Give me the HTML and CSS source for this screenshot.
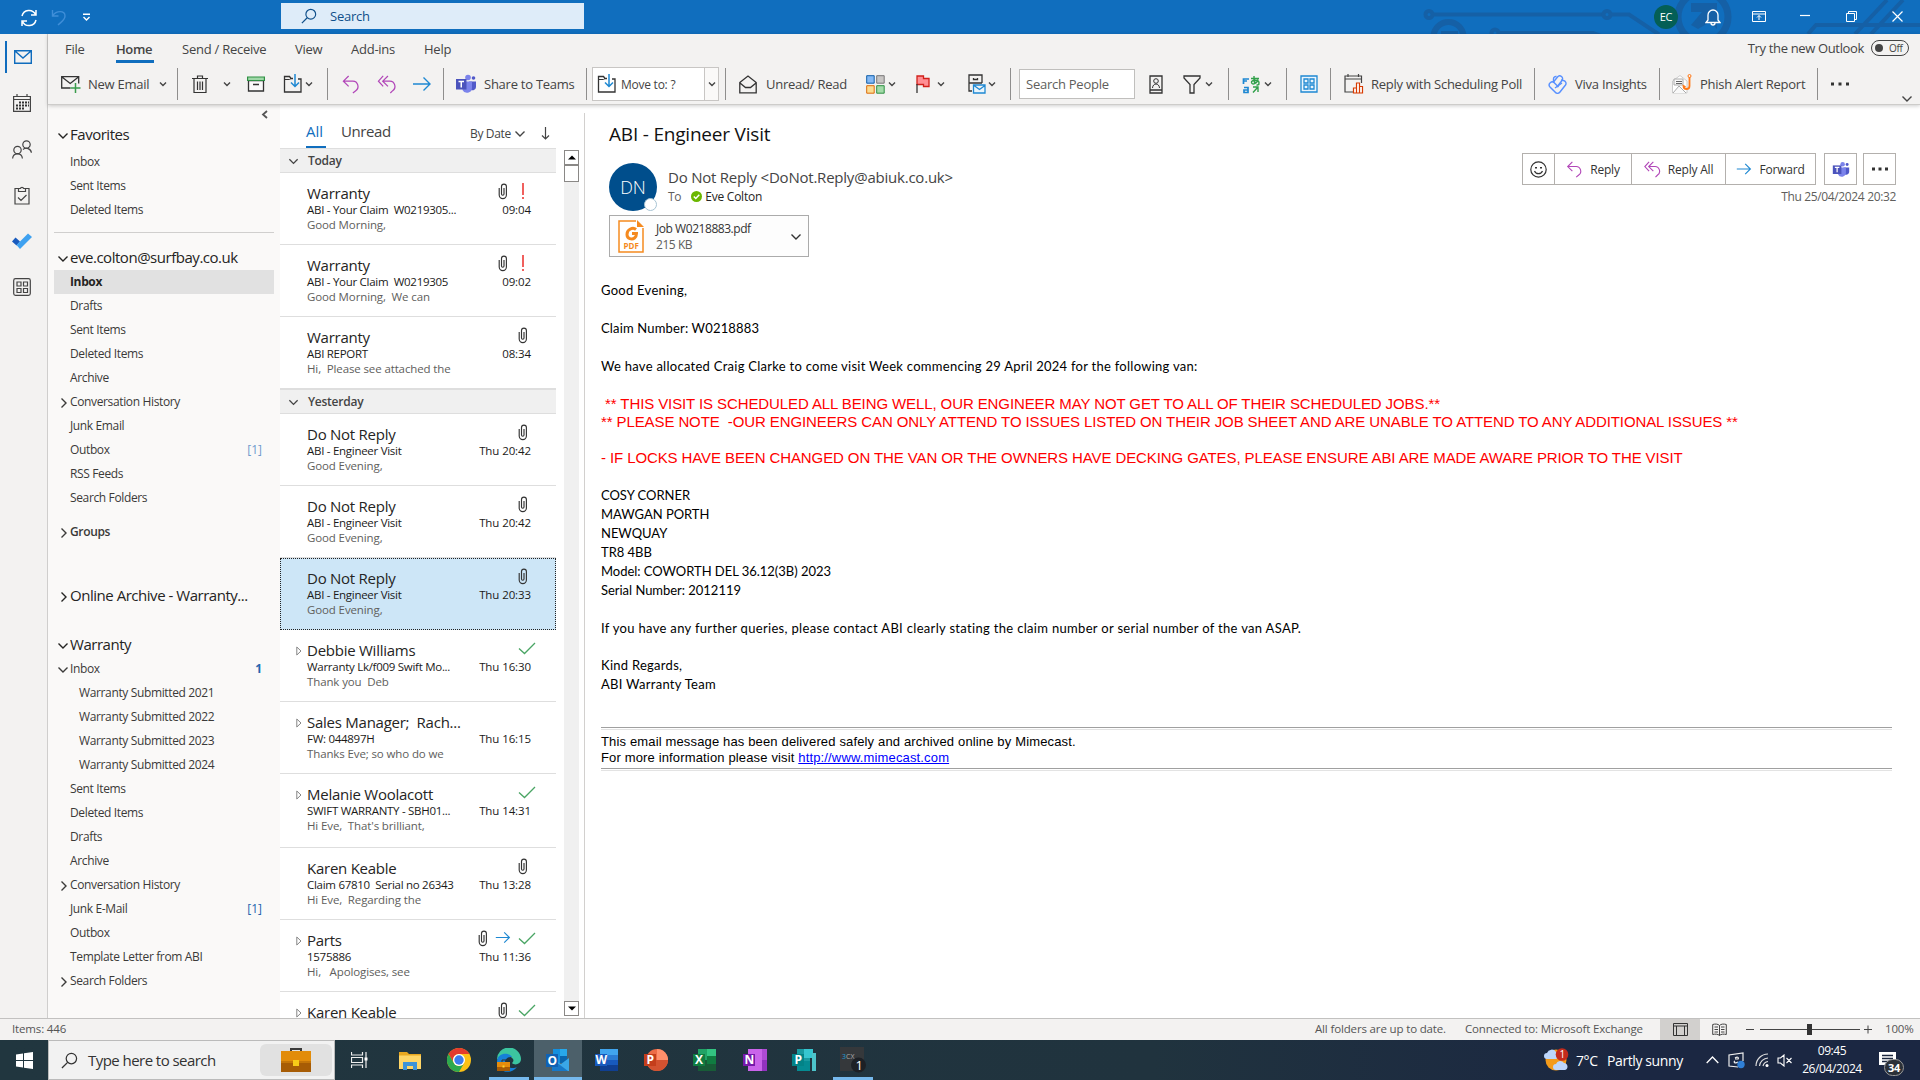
FILE: index.html
```
<!DOCTYPE html>
<html lang="en">
<head>
    <meta charset="UTF-8">
    <meta name="viewport" content="width=device-width, initial-scale=1.0">
    <title>Inbox - Outlook</title>
    <link rel="stylesheet" href="styles.css">
</head>
<body>
    <!-- shared icons -->
    <svg class="defs" width="0" height="0">
        <symbol id="down" viewBox="0 0 12 12"><path d="M1.500 3.500 6 8l4.500-4.500" fill="none" stroke="currentColor" stroke-width="1.400"/></symbol>
        <symbol id="right" viewBox="0 0 12 12"><path d="M4.500 1.500 9 6l-4.500 4.500" fill="none" stroke="currentColor" stroke-width="1.400"/></symbol>
        <symbol id="drop" viewBox="0 0 8 8"><path d="M1 2.500 4 5.500l3-3" fill="none" stroke="#444" stroke-width="1.400"/></symbol>
        <symbol id="clip" viewBox="0 0 10 17"><path d="M1.200 5v7a3.600 3.600 0 0 0 7.200 0V3.500a2.400 2.400 0 0 0-4.900 0V11a1.200 1.200 0 0 0 2.500 0V5" fill="none" stroke="#333" stroke-width="1.150"/></symbol>
        <symbol id="tick" viewBox="0 0 18 13"><path d="M1 6.500 6.500 11.500 17 1" fill="none" stroke="#4aa564" stroke-width="1.300"/></symbol>
        <symbol id="bang" viewBox="0 0 4 17"><path d="M1 0h2v12H1zM1 14h2v2H1z" fill="#f0605d"/></symbol>
        <symbol id="tri" viewBox="0 0 6 10"><path d="M.8 1 5 5 .8 9z" fill="none" stroke="#777" stroke-width=".9"/></symbol>
        <symbol id="reply" viewBox="0 0 18 20"><path d="M6.500 1 1 6.500 6.500 12M1.500 6.500H11a5.500 5.500 0 0 1 3 10l-3 2.500" fill="none" stroke="#b146b8" stroke-width="1.300"/></symbol>
        <symbol id="replyall" viewBox="0 0 20 20"><path d="M6 1 1 6.500 6 12M11 1 5.500 6.500 11 12M6 6.500h7a5.500 5.500 0 0 1 3 10L13.500 19" fill="none" stroke="#b146b8" stroke-width="1.300"/></symbol>
        <symbol id="forward" viewBox="0 0 20 16"><path d="M1 8h17M11.500 1.500 18 8l-6.500 6.500" fill="none" stroke="#1e88d2" stroke-width="1.400"/></symbol>
        <symbol id="moveto" viewBox="0 0 20 20"><path d="M10 4.500H8L6.500 2.500H1.500V18h16.500V5h-3" fill="none" stroke="#333" stroke-width="1.300"/><path d="M1.500 5.500h5L8 4.500" fill="none" stroke="#333"/><path d="M12 0v12.500M8 8.500l4 4 4-4" fill="none" stroke="#1e88d2" stroke-width="1.500"/></symbol>
        <symbol id="teams" viewBox="0 0 22 20"><circle cx="13" cy="3.500" r="2.800" fill="#7b83eb"/><circle cx="18.500" cy="4" r="1.800" fill="#5059c9"/><path d="M14 7.500h7v5.500a3.500 3.500 0 0 1-5 3z" fill="#5059c9"/><path d="M8 7.500h9v6.500a5 5 0 0 1-9.500 2z" fill="#7b83eb"/><path d="M1 5h10.500v10.500H1z" fill="#4b53bc"/><path d="M3.500 7.500H9M6.250 7.500v6" stroke="#fff" stroke-width="1.500"/></symbol>
        <symbol id="lens" viewBox="0 0 18 18"><circle cx="11" cy="7" r="5.500" fill="none" stroke="currentColor" stroke-width="1.300"/><path d="M7 11 1 17" stroke="currentColor" stroke-width="1.400"/></symbol>
    </svg>

    <header class="titlebar">
        <svg class="circuit" width="500" height="34" viewBox="0 0 500 34"><g fill="none" stroke="#1560a6" stroke-width="4"><circle cx="9" cy="14.500" r="3.500"/><path d="M13 14.500h170"/><circle cx="187" cy="14.500" r="3.500"/><path d="M191 14.500h18l30 20"/><circle cx="28.500" cy="37" r="15" stroke-width="6"/><circle cx="75" cy="33" r="3.500"/><path d="M79 33h94l8 3"/><circle cx="283" cy="17" r="25" stroke-width="7"/><path d="m388 34 8-9h110M435 34l32-34M451 34l32-34"/></g><path d="M271 3h26v26l-7-7-12 7-7-4 11-13h-11zM21 31h17v3H21z" fill="#1560a6"/></svg>
        <div class="quick">
            <svg width="18" height="18" viewBox="0 0 18 18"><path d="M2 7a7.200 7.200 0 0 1 13.500-1.500M16 11A7.200 7.200 0 0 1 2.500 12.500M16 1v5h-5M2 17v-5h5" fill="none" stroke="#fff" stroke-width="1.500"/></svg>
            <svg width="16" height="17" viewBox="0 0 16 17"><path d="M1.500 1v6h6M2 6.500C5 1.500 14 1 14 7c0 4-4 6-7 9" fill="none" stroke="#3f8ed8" stroke-width="1.400"/></svg>
            <svg width="9" height="9" viewBox="0 0 9 9"><path d="M1 1.200h7M1.500 4l3 3 3-3" fill="none" stroke="#fff" stroke-width="1.400"/></svg>
        </div>
        <div class="search"><svg width="16" height="16"><use href="#lens"/></svg><span>Search</span></div>
        <div class="window">
            <span class="me">EC</span>
            <svg width="16" height="17" viewBox="0 0 16 17"><path d="M1 13.500h14l-2-2.500V6a5 5 0 0 0-10 0v5zM6 14a2 2 0 0 0 4 0" fill="none" stroke="#fff" stroke-width="1.300"/></svg>
            <svg width="14" height="11" viewBox="0 0 14 11"><path d="M.5.5h13v10H.5zM.5 3h13M7 9V4.500M5 6.500l2-2 2 2" fill="none" stroke="#fff"/></svg>
            <svg width="11" height="10" viewBox="0 0 11 10"><path d="M0 4.500h10" stroke="#fff" stroke-width="1.200"/></svg>
            <svg width="11" height="11" viewBox="0 0 11 11"><path d="M.5 2.500h8v8h-8zM2.500 2.500v-2h8v8h-2" fill="none" stroke="#fff"/></svg>
            <svg width="11" height="11" viewBox="0 0 11 11"><path d="m.5.5 10 10M10.500.5l-10 10" stroke="#fff" stroke-width="1.200"/></svg>
        </div>
    </header>

    <div class="app">
        <aside class="rail">
            <span class="on"><svg width="18" height="14" viewBox="0 0 18 14"><path d="M.7.7h16.600v12.600H.7zM1 1l8 7 8-7" fill="none" stroke="#0f6cbd" stroke-width="1.400"/></svg></span>
            <span><svg width="18" height="18" viewBox="0 0 18 18"><path d="M.6 2.500h16.800v14.900H.6zM.6 5.500h16.800M4 0v3M14 0v3" fill="none" stroke="#444" stroke-width="1.200"/><path d="M6 8.500h10M3 11.500h13M3 14.500h8" stroke="#333" stroke-width="2" stroke-dasharray="2 1"/></svg></span>
            <span><svg width="20" height="19" viewBox="0 0 20 19"><g fill="none" stroke="#444" stroke-width="1.200"><circle cx="5.500" cy="10" r="3.700"/><path d="M.6 18.500c.5-6.300 9.300-6.300 9.800 0"/><circle cx="14.500" cy="4.500" r="3.700"/><path d="M11 9.500c3-2.500 8-1 8.400 3.300"/></g></svg></span>
            <span><svg width="16" height="19" viewBox="0 0 16 19"><path d="M5 2.500H1v15.500h14V2.500h-4M4.500 5.500h7v-3h-1.800a1.800 1.800 0 0 0-3.400 0H4.500zM4 11.500l3 3 5.500-5.500" fill="none" stroke="#444" stroke-width="1.200"/></svg></span>
            <span><svg width="20" height="16" viewBox="0 0 20 16"><path d="m0 8.500 3.500-4L8 8.500l-3.500 4z" fill="#185abd"/><path d="M4.500 12 16 .5l4 3.500L8 16z" fill="#3ea1f0"/></svg></span>
            <span><svg width="18" height="18" viewBox="0 0 18 18"><path d="M2.500.7h13a1.800 1.800 0 0 1 1.800 1.800v13a1.800 1.800 0 0 1-1.800 1.800h-13a1.800 1.800 0 0 1-1.800-1.800v-13A1.800 1.800 0 0 1 2.500.7zM4 4h4v4H4zM10.500 4h4v4h-4zM4 10.500h4v4H4zM10.500 10.500h4v4h-4z" fill="none" stroke="#444" stroke-width="1.200"/></svg></span>
        </aside>

        <div class="content">
            <div class="ribbon">
                <nav class="tabs">
                    <span>File</span><span class="active">Home</span><span>Send / Receive</span><span>View</span><span>Add-ins</span><span>Help</span>
                    <div class="trynew">Try the new Outlook <i><b></b>Off</i></div>
                </nav>
                <div class="tools">
                    <svg width="20" height="18" viewBox="0 0 20 18"><path d="M9.500 13H.7V1.700h17V8.500M1 2l8.200 6.500L17.500 2" fill="none" stroke="#333" stroke-width="1.300"/><path d="M14.500 8v10M9.500 13h10" stroke="#3a9c4c" stroke-width="1.500"/></svg>
                    <span>New Email</span>
                    <svg width="8" height="8"><use href="#drop"/></svg>
                    <i class="sep"></i>
                    <svg width="16" height="19" viewBox="0 0 16 19"><path d="M0 3.500h16M5.500 3V1h5v2M2 4v13.500h12V4M5.500 6.500V15M8 6.500V15M10.500 6.500V15" fill="none" stroke="#333" stroke-width="1.200"/></svg>
                    <svg width="8" height="8"><use href="#drop"/></svg>
                    <svg width="18" height="16" viewBox="0 0 18 16"><path d="M1.500 4.500h15v10.500h-15zM6 8.500h6" fill="#fafafa" stroke="#333" stroke-width="1.300"/><path d="M.6 1h16.800v3.500H.6z" fill="#9fd8a8" stroke="#2e8f43" stroke-width="1.200"/></svg>
                    <svg width="20" height="20"><use href="#moveto"/></svg>
                    <svg width="8" height="8"><use href="#drop"/></svg>
                    <i class="sep"></i>
                    <svg width="18" height="19"><use href="#reply"/></svg>
                    <svg width="20" height="19"><use href="#replyall"/></svg>
                    <svg width="20" height="16"><use href="#forward"/></svg>
                    <i class="sep"></i>
                    <svg width="22" height="20"><use href="#teams"/></svg>
                    <span>Share to Teams</span>
                    <i class="sep"></i>
                    <div class="movebox"><svg width="20" height="20"><use href="#moveto"/></svg><span>Move to: ?</span><b><svg width="8" height="8"><use href="#drop"/></svg></b></div>
                    <i class="sep"></i>
                    <svg width="18" height="19" viewBox="0 0 18 19"><path d="M.8 7.500 9 1l8.200 6.500v10.300H.8zM1 8l5.500 4.500h5L17 8" fill="none" stroke="#333" stroke-width="1.300"/></svg>
                    <span>Unread/ Read</span>
                    <svg width="19" height="19" viewBox="0 0 19 19"><path d="M.7.7h7.500v7.500H.7z" fill="#83b9f5" stroke="#0f5ea8"/><path d="M10.700.7h7.500v7.500h-7.500z" fill="#c8c6c4" stroke="#777"/><path d="M.7 10.700h7.500v7.500H.7z" fill="#fbdc90" stroke="#dc6b0b"/><path d="M10.700 10.700h7.500v7.500h-7.500z" fill="#a3dba9" stroke="#2e8f43"/></svg>
                    <svg width="8" height="8"><use href="#drop"/></svg>
                    <svg width="14" height="18" viewBox="0 0 14 18"><path d="M1 1h6.500v2.500H13v8H7.500V9.500H1z" fill="#ff8f94" stroke="#d1201a" stroke-width="1.300"/><path d="M1 9v9" stroke="#333" stroke-width="1.300"/></svg>
                    <svg width="8" height="8"><use href="#drop"/></svg>
                    <svg width="18" height="20" viewBox="0 0 18 20"><path d="M4 17H1V1h13v8M1 9h13M5.500 4v1.500h4V4" fill="none" stroke="#333" stroke-width="1.300"/><path d="M5.500 11h11.500v8H5.500zM6 11.500l5.500 4 5.500-4" fill="#e9f5fc" stroke="#1e88d2" stroke-width="1.300"/></svg>
                    <svg width="8" height="8"><use href="#drop"/></svg>
                    <i class="sep"></i>
                    <div class="people">Search People</div>
                    <svg width="14" height="19" viewBox="0 0 14 19"><path d="M1 1h12v17H1zM1 15h12" fill="none" stroke="#333" stroke-width="1.300"/><circle cx="7" cy="6" r="2.300" fill="none" stroke="#333"/><path d="M3.500 13c.3-5.300 6.700-5.300 7 0" fill="none" stroke="#333"/></svg>
                    <svg width="18" height="19" viewBox="0 0 18 19"><path d="M1 1h16v2l-6 6.500V18H7V9.500L1 3z" fill="none" stroke="#333" stroke-width="1.300"/></svg>
                    <svg width="8" height="8"><use href="#drop"/></svg>
                    <i class="sep"></i>
                    <svg width="19" height="19" viewBox="0 0 19 19"><path d="M7 4H1.500v5M1.500 6H5M2 12.500h4v5H2v-2.500h4" fill="none" stroke="#1e88d2" stroke-width="1.700"/><path d="M9 3.500h8M12 1c0 4 0 6 1 8M16 4.500c-1 4-6 6-6.500 3s7-3 7.500 0-2.500 2.500-2.500 2.500M11 12h5v5M16 12l-5 5.500" fill="none" stroke="#31a04a" stroke-width="1.400"/></svg>
                    <svg width="8" height="8"><use href="#drop"/></svg>
                    <i class="sep"></i>
                    <svg width="18" height="18" viewBox="0 0 18 18"><path d="M1 1h16v16H1zM4 4h4v4H4zM10 4h4v4h-4zM4 10h4v4H4zM10 10h4v4h-4z" fill="#eaf5fd" stroke="#1e88d2" stroke-width="1.300"/></svg>
                    <i class="sep"></i>
                    <svg width="20" height="20" viewBox="0 0 20 20"><path d="M9 18H1V2h16.500v7M1 5h16.500M4 0v3M14.500 0v3" fill="none" stroke="#444" stroke-width="1.200"/><path d="M9.500 14h3v5h-3zM12.500 9h3v10h-3zM15.500 12.500h3V19h-3z" fill="#fff" stroke="#d83b01" stroke-width="1.200"/></svg>
                    <span>Reply with Scheduling Poll</span>
                    <i class="sep"></i>
                    <svg width="19" height="19" viewBox="0 0 19 19"><g fill="none" stroke="#5790ff" stroke-width="1.400"><path d="M5.500 7 9.500 2a2.800 2.800 0 0 1 4.500 3.500L9 12"/><path d="m13 5 2.500.5a2.900 2.900 0 0 1 2 4.500L12 17a3 3 0 0 1-5 0l-5-5A3 3 0 0 1 6.500 8l4 4"/><path d="M5.500 8V4a2.500 2.500 0 0 1 3-2.500M7 13l7-5"/></g></svg>
                    <span>Viva Insights</span>
                    <i class="sep"></i>
                    <svg width="20" height="20" viewBox="0 0 20 20"><path d="M.5 7 8 1.500 15 7v12H.5z" fill="#fff" stroke="#ccc"/><path d="M2 5h9v6H2zM1 19l6-7 7 7" fill="#f8f8f8" stroke="#aaa"/><path d="M4 7.500h6M4 9.500h6" stroke="#666"/><path d="M17.500 3v9a3 3 0 0 1-6 0l2 1" fill="none" stroke="#ff7a1a" stroke-width="1.800"/><circle cx="17.500" cy="2" r="1.500" fill="none" stroke="#ff7a1a"/></svg>
                    <span>Phish Alert Report</span>
                    <i class="sep"></i>
                    <svg width="18" height="4" viewBox="0 0 18 4"><path d="M0 .5h3v3H0zM7.500.5h3v3h-3zM15 .5h3v3h-3z" fill="#333"/></svg>
                    <svg class="fold" width="12" height="12"><use href="#down"/></svg>
                </div>
            </div>

            <div class="panes">
                <nav class="folders">
                    <svg class="collapse" width="8" height="9" viewBox="0 0 8 9"><path d="M6 1 2 4.500 6 8" fill="none" stroke="#555" stroke-width="1.800"/></svg>
                    <h3><svg><use href="#down"/></svg>Favorites</h3>
                    <p>Inbox</p>
                    <p>Sent Items</p>
                    <p>Deleted Items</p>
                    <hr>
                    <h3><svg><use href="#down"/></svg>eve.colton@surfbay.co.uk</h3>
                    <p class="selected">Inbox</p>
                    <p>Drafts</p>
                    <p>Sent Items</p>
                    <p>Deleted Items</p>
                    <p>Archive</p>
                    <p><svg><use href="#right"/></svg>Conversation History</p>
                    <p>Junk Email</p>
                    <p>Outbox <em class="pale">[1]</em></p>
                    <p>RSS Feeds</p>
                    <p>Search Folders</p>
                    <p class="groups"><svg><use href="#right"/></svg>Groups</p>
                    <h3 class="archive"><svg><use href="#right"/></svg>Online Archive - Warranty...</h3>
                    <h3><svg><use href="#down"/></svg>Warranty</h3>
                    <p><svg><use href="#down"/></svg>Inbox <em class="count">1</em></p>
                    <p class="sub">Warranty Submitted 2021</p>
                    <p class="sub">Warranty Submitted 2022</p>
                    <p class="sub">Warranty Submitted 2023</p>
                    <p class="sub">Warranty Submitted 2024</p>
                    <p>Sent Items</p>
                    <p>Deleted Items</p>
                    <p>Drafts</p>
                    <p>Archive</p>
                    <p><svg><use href="#right"/></svg>Conversation History</p>
                    <p>Junk E-Mail <em>[1]</em></p>
                    <p>Outbox</p>
                    <p>Template Letter from ABI</p>
                    <p><svg><use href="#right"/></svg>Search Folders</p>
                </nav>

                <section class="list">
                    <div class="mails">
                        <div class="filter">
                            <span class="all">All</span><span class="unread">Unread</span>
                            <span class="bydate">By Date</span><svg width="12" height="12"><use href="#down"/></svg>
                            <svg class="order" width="9" height="13" viewBox="0 0 9 13"><path d="M4.500 0v12M1 8.500 4.500 12 8 8.500" fill="none" stroke="#444" stroke-width="1.200"/></svg>
                        </div>
                        <h4><svg><use href="#down"/></svg>Today</h4>
                        <article>
                            <b>Warranty</b><i><svg class="clip"><use href="#clip"/></svg><svg class="bang"><use href="#bang"/></svg></i>
                            <span>ABI - Your Claim&nbsp; W0219305...</span><time>09:04</time>
                            <small>Good Morning,</small>
                        </article>
                        <article>
                            <b>Warranty</b><i><svg class="clip"><use href="#clip"/></svg><svg class="bang"><use href="#bang"/></svg></i>
                            <span>ABI - Your Claim&nbsp; W0219305</span><time>09:02</time>
                            <small>Good Morning,&nbsp; We can</small>
                        </article>
                        <article>
                            <b>Warranty</b><i><svg class="clip"><use href="#clip"/></svg></i>
                            <span>ABI REPORT</span><time>08:34</time>
                            <small>Hi,&nbsp; Please see attached the</small>
                        </article>
                        <h4><svg><use href="#down"/></svg>Yesterday</h4>
                        <article>
                            <b>Do Not Reply</b><i><svg class="clip"><use href="#clip"/></svg></i>
                            <span>ABI - Engineer Visit</span><time>Thu 20:42</time>
                            <small>Good Evening,</small>
                        </article>
                        <article>
                            <b>Do Not Reply</b><i><svg class="clip"><use href="#clip"/></svg></i>
                            <span>ABI - Engineer Visit</span><time>Thu 20:42</time>
                            <small>Good Evening,</small>
                        </article>
                        <article class="current">
                            <b>Do Not Reply</b><i><svg class="clip"><use href="#clip"/></svg></i>
                            <span>ABI - Engineer Visit</span><time>Thu 20:33</time>
                            <small>Good Evening,</small>
                        </article>
                        <article>
                            <b><svg><use href="#tri"/></svg>Debbie Williams</b><i><svg class="tick"><use href="#tick"/></svg></i>
                            <span>Warranty Lk/f009 Swift Mo...</span><time>Thu 16:30</time>
                            <small>Thank you&nbsp; Deb</small>
                        </article>
                        <article>
                            <b><svg><use href="#tri"/></svg>Sales Manager;&nbsp; Rach...</b><i></i>
                            <span>FW: 044897H</span><time>Thu 16:15</time>
                            <small>Thanks Eve; so who do we</small>
                        </article>
                        <article class="tall">
                            <b><svg><use href="#tri"/></svg>Melanie Woolacott</b><i><svg class="tick"><use href="#tick"/></svg></i>
                            <span>SWIFT WARRANTY - SBH01...</span><time>Thu 14:31</time>
                            <small>Hi Eve,&nbsp; That's brilliant,</small>
                        </article>
                        <article>
                            <b>Karen Keable</b><i><svg class="clip"><use href="#clip"/></svg></i>
                            <span>Claim 67810&nbsp; Serial no 26343</span><time>Thu 13:28</time>
                            <small>Hi Eve,&nbsp; Regarding the</small>
                        </article>
                        <article>
                            <b><svg><use href="#tri"/></svg>Parts</b><i><svg class="clip"><use href="#clip"/></svg><svg class="fwd"><use href="#forward"/></svg><svg class="tick"><use href="#tick"/></svg></i>
                            <span>1575886</span><time>Thu 11:36</time>
                            <small>Hi,&nbsp;&nbsp; Apologises, see</small>
                        </article>
                        <article>
                            <b><svg><use href="#tri"/></svg>Karen Keable</b><i><svg class="clip"><use href="#clip"/></svg><svg class="tick"><use href="#tick"/></svg></i>
                        </article>
                    </div>
                    <div class="scroll">
                        <span><svg width="8" height="5"><path d="M0 4.500h8L4 .5z" fill="#000"/></svg></span>
                        <span class="thumb"></span>
                        <span class="end"><svg width="8" height="5"><path d="M0 .5h8l-4 4z" fill="#000"/></svg></span>
                    </div>
                </section>

                <main class="reading">
                    <h1>ABI - Engineer Visit</h1>
                    <div class="from">
                        <div class="avatar">DN<i></i></div>
                        <div class="who">
                            <div class="sender">Do Not Reply &lt;DoNot.Reply@abiuk.co.uk&gt;</div>
                            <div class="to">To <svg width="11" height="11" viewBox="0 0 11 11"><circle cx="5.500" cy="5.500" r="5.500" fill="#6bb700"/><path d="M2.800 5.500 4.800 7.500 8.300 3.800" fill="none" stroke="#fff" stroke-width="1.500"/></svg><span>Eve Colton</span></div>
                        </div>
                        <div class="side">
                            <div class="actions">
                                <span class="smile"><svg width="17" height="17" viewBox="0 0 17 17"><circle cx="8.500" cy="8.500" r="7.700" fill="none" stroke="#333" stroke-width="1.200"/><path d="M5 6h2v1.500H5zM10 6h2v1.500h-2z" fill="#333"/><path d="M4.500 10a4.300 4.300 0 0 0 8 0" fill="none" stroke="#333" stroke-width="1.200"/></svg></span>
                                <span class="re"><svg width="17" height="17"><use href="#reply"/></svg>Reply</span>
                                <span class="all"><svg width="17" height="17"><use href="#replyall"/></svg>Reply All</span>
                                <span class="fw"><svg width="16" height="14"><use href="#forward"/></svg>Forward</span>
                                <span class="tm"><svg width="18" height="17"><use href="#teams"/></svg></span>
                                <span class="more"><svg width="16" height="4" viewBox="0 0 16 4"><path d="M0 .5h3v3H0zM6.500.5h3v3h-3zM13 .5h3v3h-3z" fill="#333"/></svg></span>
                            </div>
                            <div class="date">Thu 25/04/2024 20:32</div>
                        </div>
                    </div>
                    <div class="attachment">
                        <svg width="26" height="33" viewBox="0 0 26 33"><path d="M18 1H1v31h24V8" fill="#fff" stroke="#f58a1f" stroke-width="1.500"/><path d="M19 0v7h7z" fill="#f58a1f"/><path d="M18 9.500c-3-2.500-9-.5-9 5 0 4.500 5 5.500 7.500 3.500 1.500-1.200 2-3 2-4.500h-4.500" fill="none" stroke="#f58a1f" stroke-width="3"/><text x="5.500" y="28.500" class="pdf">PDF</text></svg>
                        <div><span>Job W0218883.pdf</span><small>215 KB</small></div>
                        <svg class="more" width="12" height="12"><use href="#down"/></svg>
                    </div>

                    <div class="letter">
                        <p>Good Evening,</p>
                        <p class="claim">Claim Number: W0218883</p>
                        <p>We have allocated Craig Clarke to come visit Week commencing 29 April 2024 for the following van:</p>
                        <div class="notice">&nbsp;** THIS VISIT IS SCHEDULED ALL BEING WELL, OUR ENGINEER MAY NOT GET TO ALL OF THEIR SCHEDULED JOBS.**<br>
                        ** PLEASE NOTE&nbsp; -OUR ENGINEERS CAN ONLY ATTEND TO ISSUES LISTED ON THEIR JOB SHEET AND ARE UNABLE TO ATTEND TO ANY ADDITIONAL ISSUES **<br><br>
                        - IF LOCKS HAVE BEEN CHANGED ON THE VAN OR THE OWNERS HAVE DECKING GATES, PLEASE ENSURE ABI ARE MADE AWARE PRIOR TO THE VISIT</div>
                        <p class="address">COSY CORNER<br>MAWGAN PORTH<br>NEWQUAY<br>TR8 4BB<br>Model: COWORTH DEL 36.12(3B) 2023<br>Serial Number: 2012119</p>
                        <p class="queries">If you have any further queries, please contact ABI clearly stating the claim number or serial number of the van ASAP.</p>
                        <p>Kind Regards,<br>ABI Warranty Team</p>
                        <div class="mimecast">This email message has been delivered safely and archived online by Mimecast.<br>For more information please visit <a href="http://www.mimecast.com">http://www.mimecast.com</a></div>
                    </div>
                </main>
            </div>
        </div>
    </div>

    <footer class="status">
        <span>Items: 446</span>
        <span class="sync">All folders are up to date.</span>
        <span class="conn">Connected to: Microsoft Exchange</span>
        <span class="view"><svg width="15" height="13" viewBox="0 0 15 13"><path d="M.5.500h14v12H.5zM.5 3h14M3.500 3v9.500M11.500 3v9.500" fill="none" stroke="#333"/></svg></span>
        <svg class="book" width="15" height="14" viewBox="0 0 15 14"><path d="M7.500 2.500C6 .8 3 .8.700 1.500v10c2.300-.6 5.300-.6 6.800 1 1.500-1.600 4.500-1.600 6.800-1v-10C12 .8 9 .8 7.500 2.500v10M2.500 4H6M2.500 6.500H6M2.500 9H6M9 4h3.500M9 6.500h3.500M9 9h3.500" fill="none" stroke="#444"/></svg>
        <svg class="zoom" width="126" height="14" viewBox="0 0 126 14"><path d="M0 6.500h8M14 6.500h100M118 6.500h8M122 2.500v8" stroke="#444"/><path d="M61 1h5v11h-5z" fill="#333"/></svg>
        <span class="percent">100%</span>
    </footer>

    <footer class="taskbar">
        <div class="start"><svg width="17" height="17" viewBox="0 0 17 17"><path d="m0 2.400 7-1v6.600H0zM8 1.200 17 0v8H8zM0 9h7v6.600l-7-1zM8 9h9v8l-9-1.200z" fill="#fff"/></svg></div>
        <div class="find">
            <svg width="17" height="17"><use href="#lens"/></svg><span>Type here to search</span>
            <div class="pill"><svg width="30" height="26" viewBox="0 0 30 26"><path d="M10 5V2h10v3" fill="none" stroke="#3b3b3b" stroke-width="2"/><path d="M0 4h30v21H0z" fill="#e28c0a"/><path d="M0 16h30v9H0z" fill="#a75c05"/><path d="M0 14h30v2H0z" fill="#c47508"/><path d="M12 13h6v6h-6z" fill="#f7ca18"/></svg></div>
        </div>
        <div class="apps">
            <span><svg width="17" height="16" viewBox="0 0 17 16"><path d="M.5 0v3h11V0M.5 5.500h11v5H.5zM.5 16v-3h11v3M15 0v16" fill="none" stroke="#eee" stroke-width="1.200"/><path d="M13.500 5.500h3v3h-3z" fill="#fff"/></svg></span>
            <span><svg width="22" height="19" viewBox="0 0 22 19"><path d="M0 1h8l2 2h12v14H0z" fill="#e9a820"/><path d="M0 4.500h22V18H0z" fill="#ffd667"/><path d="M4 19v-8h14v8h-4v-4H8v4z" fill="#3d93d8"/></svg></span>
            <span><svg width="24" height="24" viewBox="0 0 24 24"><circle cx="12" cy="12" r="12" fill="#fbc116"/><path d="M1.600 6A12 12 0 0 1 22.400 6H12a6 6 0 0 0-5.200 9z" fill="#e33b2e"/><path d="M1.600 6A12 12 0 0 0 12 24l5.200-9A6 6 0 0 1 6.800 15z" fill="#2da94f"/><circle cx="12" cy="12" r="6" fill="#fff"/><circle cx="12" cy="12" r="4.700" fill="#3b7ded"/></svg></span>
            <span class="open"><svg width="24" height="24" viewBox="0 0 24 24"><path d="M0 12A12 12 0 0 1 24 11c0 5-6 7-9 4 1-1 2-2 1-4-3-5-13-5-16 1z" fill="#3cc5a0"/><path d="M0 13C1 4 12 4 15 9c-6-1-9 5-5 9 2 2 7 3 10 1-6 8-20 6-20-6z" fill="#1680d8"/><path d="M0 14h13v9H0z" fill="#e58c0c"/><path d="M0 19h13v4H0z" fill="#a85b04"/><path d="M5 14v-2h4v2" fill="none" stroke="#333"/><path d="M5.500 17.500h2v2h-2z" fill="#ffd22e"/></svg></span>
            <span class="open now"><svg width="24" height="23" viewBox="0 0 24 23"><path d="M7 0h14v14H7z" fill="#1490df"/><path d="M14 0h7v7h-7z" fill="#28a8ea"/><path d="M14 7h7v7h-7z" fill="#0a65ad"/><path d="M6 10l9 5 8-6v13H6z" fill="#3aa7e8"/><path d="m6 10 16 12H6z" fill="#1778c8"/><path d="M0 5h12v13H0z" fill="#0f62b4"/><text x="1.500" y="15.500" class="app">O</text></svg></span>
            <span><svg width="24" height="22" viewBox="0 0 24 22"><path d="M5 0h18v6H5z" fill="#41a5ee"/><path d="M5 6h18v5H5z" fill="#2b7cd3"/><path d="M5 11h18v5H5z" fill="#185abd"/><path d="M5 16h18v6H5z" fill="#103f91"/><path d="M0 5h12v12H0z" fill="#185abd"/><text x="0.500" y="15" class="app">W</text></svg></span>
            <span><svg width="24" height="22" viewBox="0 0 24 22"><circle cx="13" cy="11" r="11" fill="#ed6c47"/><path d="M13 0a11 11 0 0 1 11 11H13z" fill="#ff8f6b"/><path d="M2 11h22a11 11 0 0 1-22 0z" fill="#d35230"/><path d="M0 5h12v12H0z" fill="#c43e1c"/><text x="2.500" y="15" class="app">P</text></svg></span>
            <span><svg width="24" height="22" viewBox="0 0 24 22"><path d="M5 0h9v22H5z" fill="#21a366"/><path d="M14 0h9v7h-9z" fill="#33c481"/><path d="M14 7h9v8h-9z" fill="#107c41"/><path d="M5 11h9v11H5zM14 15h9v7h-9z" fill="#185c37"/><path d="M0 5h12v12H0z" fill="#107c41"/><text x="2" y="15" class="app">X</text></svg></span>
            <span><svg width="24" height="22" viewBox="0 0 24 22"><path d="M5 0h19v22H5z" fill="#ca64ea"/><path d="M19 0h5v22h-5z" fill="#ae4bd5"/><path d="M19 11h5v11h-5z" fill="#9332bf"/><path d="M0 5h12v12H0z" fill="#7719aa"/><text x="1.500" y="15" class="app">N</text></svg></span>
            <span><svg width="24" height="22" viewBox="0 0 24 22"><path d="M5 0h13v22H5z" fill="#1a9ba1"/><path d="M12 0h9v9h-9z" fill="#37c6d0"/><path d="M20 4h4v18h-4z" fill="#4dc4cb"/><path d="M5 12h13v10H5z" fill="#058b92"/><path d="M0 5h12v12H0z" fill="#038387"/><text x="2.500" y="15" class="app">P</text></svg></span>
            <span class="open"><svg width="26" height="26" viewBox="0 0 26 26"><path d="M0 0h24v24H0z" fill="#35383b"/><text x="2" y="12" class="cx"><tspan fill="#1b9cd8">3</tspan>CX</text><circle cx="18.500" cy="18" r="7.500" fill="#1d2025"/><text x="15.500" y="22.500" class="badge">1</text></svg></span>
        </div>
        <div class="tray">
            <svg width="25" height="24" viewBox="0 0 25 24"><circle cx="12" cy="12" r="10.500" fill="#f39b1b"/><path d="M3 11a3 3 0 0 1 0-6 5 5 0 0 1 9-1c3 1 3 6 0 7zM12 22a3 3 0 0 1 0-6 4.500 4.500 0 0 1 8-1c4 0 5 6 1 7z" fill="#bdd6fb"/><circle cx="18" cy="6.500" r="6.300" fill="#c42b1c"/><text x="15.500" y="10" class="alert">1</text></svg>
            <span class="temp">7°C</span><span class="sunny">Partly sunny</span>
            <svg class="up" width="13" height="8" viewBox="0 0 13 8"><path d="M.7 7 6.500 1 12.300 7" fill="none" stroke="#fff" stroke-width="1.300"/></svg>
            <svg class="upd" width="18" height="17" viewBox="0 0 18 17"><path d="M15 9V1L1 3v11l9 1M7 6c3-2 4 0 3 1H7M10 10c-3 2-5 0-3-1" fill="none" stroke="#eee" stroke-width="1.200"/><circle cx="13" cy="12.500" r="3.700" fill="#2f7fd6"/></svg>
            <svg class="wifi" width="14" height="14" viewBox="0 0 14 14"><path d="M1 13A12 12 0 0 1 13 1M4.500 13A9 9 0 0 1 13 5M8 13a6 6 0 0 1 5-4.500" fill="none" stroke="#ddd" stroke-width="1.200"/><circle cx="12" cy="12.500" r="1.500" fill="#fff"/></svg>
            <svg class="mute" width="15" height="13" viewBox="0 0 15 13"><path d="M1 4h2.500L7 1v11L3.500 9H1zM9.500 4l5 5M14.500 4l-5 5" fill="none" stroke="#fff" stroke-width="1.100"/></svg>
            <div class="clock">09:45<br>26/04/2024</div>
            <div class="notes"><svg width="17" height="16" viewBox="0 0 17 16"><path d="M0 0h17v13h-7l-3 3v-3H0z" fill="#fff"/><path d="M3 3.500h11M3 6.500h11M3 9.500h7" stroke="#1c2840" stroke-width="1.300"/></svg><b>34</b></div>
        </div>
    </footer>
</body>
</html>
```

FILE: styles.css
```
* {
    box-sizing: border-box;
}
body {
    margin: 0;
    width: 1920px;
    height: 1080px;
    overflow: hidden;
    display: flex;
    flex-direction: column;
    background: #fff;
    color: #333;
    font-family: "Open Sans", "Noto Sans", sans-serif;
    font-size: 12px;
}
svg {
    display: block;
    flex: none;
}
i, em {
    font-style: normal;
}
h1, h3, h4, p {
    margin: 0;
    font-weight: 400;
}
.defs {
    position: absolute;
}

/* title bar */
.titlebar {
    position: relative;
    height: 34px;
    flex: none;
    display: flex;
    background: #106ebe;
    color: #fff;
}
.circuit {
    position: absolute;
    left: 1420px;
    top: 0;
}
.quick {
    width: 281px;
    padding: 1px 0 0 20px;
    display: flex;
    align-items: center;
    gap: 13px;
}
.quick svg:last-child {
    margin-left: 2px;
}
.search {
    width: 303px;
    height: 26px;
    margin-top: 3px;
    padding-left: 20px;
    display: flex;
    align-items: center;
    gap: 13px;
    background: #deecf9;
    color: #0f4f8a;
    font-size: 13px;
    letter-spacing: -0.25px;
}
.window {
    position: relative;
    margin-left: 1070px;
    display: grid;
    grid-template-columns: 51px 47px 48px 46px 46px 18px;
    align-items: center;
}
.window svg {
    margin-bottom: 2px;
}
.window svg:nth-child(2) {
    margin: 1px 0 0;
}
.me {
    width: 24px;
    height: 24px;
    border-radius: 50%;
    background: #045f56;
    font-size: 11px;
    line-height: 24px;
    text-align: center;
    letter-spacing: -0.3px;
}

.app {
    height: 984px;
    flex: none;
    display: flex;
}

/* left rail */
.rail {
    width: 48px;
    background: #f3f2f1;
    border-right: 1px solid #cfcecd;
}
.rail span {
    height: 46px;
    display: flex;
    align-items: center;
    justify-content: center;
    padding-right: 3px;
}
.rail .on {
    height: 32px;
    margin: 7px 0;
    padding-right: 8px;
    margin-left: 5px;
    border-left: 2px solid #0f6cbd;
}
.content {
    flex: 1;
    display: flex;
    flex-direction: column;
}

/* ribbon */
.ribbon {
    position: relative;
    z-index: 1;
    height: 71px;
    background: #f3f2f1;
    border-bottom: 1px solid #cdccca;
    box-shadow: 0 1px 4px rgba(0, 0, 0, .2);
}
.tabs {
    height: 33px;
    padding-left: 17px;
    display: flex;
    font-size: 13px;
    line-height: 31px;
    letter-spacing: -0.25px;
    color: #444;
}
.tabs > span {
    margin-right: 28px;
    height: 29px;
    white-space: nowrap;
}
.tabs span:nth-child(1) { width: 23px; }
.tabs span:nth-child(2) { width: 38px; }
.tabs span:nth-child(3) { width: 85px; }
.tabs span:nth-child(4) { width: 28px; }
.tabs span:nth-child(5) { width: 45px; }
.tabs .active {
    border-bottom: 3px solid #106ebe;
    font-weight: 600;
    letter-spacing: -0.4px;
}
.trynew {
    margin-left: auto;
    margin-right: 11px;
    display: flex;
    align-items: center;
    gap: 7px;
    letter-spacing: -0.35px;
    line-height: 28px;
    height: 28px;
}
.trynew i {
    width: 38px;
    height: 16px;
    border: 1px solid #444;
    border-radius: 8px;
    display: flex;
    align-items: center;
    gap: 6px;
    padding-left: 3px;
    font-size: 10px;
}
.trynew b {
    width: 8px;
    height: 8px;
    border-radius: 50%;
    background: #444;
}
.tools {
    position: relative;
    height: 34px;
    padding-left: 13px;
    display: grid;
    grid-template-columns: 27px 71px 18px 15px 31px 24px 36px 22px 22px 15px 35px 35px 31px 12px 29px 102px 6px 133px 14px 27px 100px 22px 28px 21px 31px 20px 22px 9px 130px 34px 22px 23px 14px 22px 22px 14px 30px 14px 27px 163px 14px 27px 84px 13px 28px 117px 14px 60px;
    align-items: center;
    font-size: 13px;
    letter-spacing: -0.25px;
    color: #444;
    white-space: nowrap;
}
.sep {
    width: 1px;
    height: 32px;
    background: #8f8e8d;
}
.fold {
    position: absolute;
    left: 1853px;
    top: 26px;
}
.movebox {
    width: 127px;
    height: 34px;
    padding-left: 4px;
    border: 1px solid #c8c6c4;
    background: #fff;
    display: flex;
    align-items: center;
    gap: 4px;
    font-size: 12px;
}
.movebox b {
    height: 32px;
    width: 14px;
    margin-left: auto;
    border-left: 1px solid #c8c6c4;
    background: #faf9f8;
    display: flex;
    align-items: center;
    justify-content: center;
}
.people {
    width: 116px;
    height: 30px;
    padding-left: 6px;
    border: 1px solid #c0bfbd;
    background: #fff;
    line-height: 28px;
    color: #605e5c;
}

.panes {
    flex: 1;
    min-height: 0;
    display: flex;
}

/* folder pane */
.folders {
    position: relative;
    width: 232px;
    padding: 18px 6px 0;
    background: #faf9f8;
    letter-spacing: -0.36px;
}
.collapse {
    position: absolute;
    left: 213px;
    top: 5px;
}
.folders h3, .folders p {
    position: relative;
    height: 24px;
    padding: 0 12px 0 16px;
    line-height: 23px;
    color: #3b3a39;
    white-space: nowrap;
    display: flex;
}
.folders h3 {
    font-size: 15px;
    letter-spacing: -0.47px;
    color: #252423;
}
.folders h3:first-of-type {
    height: 27px;
}
.folders h3 svg, .folders p svg {
    width: 12px;
    height: 12px;
    margin: 7px 1px 0 -13px;
}
.folders em {
    margin-left: auto;
    color: #2565ae;
    letter-spacing: 0;
}
.folders .pale {
    color: #6f9bcd;
}
.folders .count {
    font-weight: 700;
}
.folders hr {
    height: 1px;
    margin: 10px 0 13px;
    border: 0;
    background: #d0cfce;
}
.folders .selected {
    background: #e1e1e1;
    font-weight: 700;
    color: #252423;
}
.folders .sub {
    padding-left: 25px;
}
.folders .groups {
    margin-top: 10px;
    font-weight: 600;
}
.folders .archive {
    margin: 40px 0 25px;
}

/* message list */
.list {
    width: 306px;
    margin-top: 8px;
    display: flex;
    border: 1px solid #d2d0ce;
    border-width: 0 1px;
    margin-left: -1px;
    overflow: hidden;
}
.mails {
    width: 276px;
    flex: none;
}
.filter {
    height: 35px;
    display: flex;
    padding-left: 26px;
    color: #444;
    line-height: 37px;
}
.filter .all {
    width: 20px;
    margin-right: 15px;
    border-bottom: 1px solid #106ebe;
    box-shadow: 0 -1px #106ebe inset;
    color: #106ebe;
    font-size: 15px;
}
.filter .unread {
    width: 129px;
    font-size: 15px;
    letter-spacing: -0.4px;
}
.filter .bydate {
    width: 44px;
    padding-top: 2px;
    letter-spacing: -0.35px;
}
.filter svg {
    margin-top: 15px;
}
.filter .order {
    margin: 14px 0 0 15px;
}
.mails h4 {
    height: 25px;
    padding-left: 27px;
    display: flex;
    background: #f0f0f0;
    border: 1px solid #dedede;
    border-width: 1px 0;
    font-size: 12px;
    font-weight: 600;
    line-height: 24px;
    letter-spacing: -0.25px;
    color: #444;
}
.mails h4 svg {
    width: 11px;
    height: 11px;
    margin: 7px 9px 0 -19px;
}
.mails article {
    height: 72px;
    padding: 10px 25px 0 27px;
    border-bottom: 1px solid #dedede;
    display: grid;
    grid-template: 18px 15px 15px / 1fr auto;
    font-size: 11.500px;
    line-height: 18px;
    white-space: nowrap;
    color: #1b1a19;
}
.mails .tall {
    height: 74px;
}
.mails article b {
    display: flex;
    font-size: 15px;
    font-weight: 400;
    letter-spacing: -0.25px;
    color: #252423;
    line-height: 20px;
}
.mails article b svg {
    width: 6px;
    height: 10px;
    margin: 6px 5px 0 -11px;
}
.mails article i {
    display: flex;
    justify-content: flex-end;
    gap: 7px;
}
.mails .clip {
    width: 10px;
    height: 17px;
    margin-right: 3px;
}
.mails .bang {
    width: 4px;
    height: 17px;
    margin: 0 6px 0 3px;
}
.mails .tick {
    width: 18px;
    height: 13px;
    margin: 2px -5px 0 0;
}
.mails .fwd {
    width: 16px;
    height: 13px;
    margin: 1px 0 0 -3px;
}
.mails article span {
    letter-spacing: -0.28px;
}
.mails article time {
    text-align: right;
    letter-spacing: -0.1px;
}
.mails article small {
    font-size: 11.500px;
    letter-spacing: -0.12px;
    color: #605e5c;
}
.mails .current {
    background: #cde6f7;
    border: 1px dotted #222;
    padding: 9px 24px 0 26px;
}
.scroll {
    width: 15px;
    margin: 37px 0 2px 8px;
    display: flex;
    flex-direction: column;
    background: #f0f0f0;
}
.scroll span {
    height: 15px;
    border: 1px solid #8a8886;
    background: #fff;
    display: flex;
    align-items: center;
    justify-content: center;
}
.scroll .thumb {
    height: 17px;
}
.scroll .end {
    margin-top: auto;
}

/* reading pane */
.reading {
    flex: 1;
    padding: 17px 24px 0 24px;
}
.reading h1 {
    height: 41px;
    font-size: 19px;
    line-height: 25px;
    letter-spacing: -0.2px;
    color: #111;
}
.from {
    display: flex;
    height: 52px;
}
.avatar {
    position: relative;
    width: 48px;
    height: 48px;
    border-radius: 50%;
    background: #004e8c;
    color: #fff;
    font-size: 18px;
    font-weight: 300;
    line-height: 49px;
    text-align: center;
}
.avatar i {
    position: absolute;
    right: 0;
    bottom: 0;
    width: 13px;
    height: 13px;
    border: 1px solid #a7c4d4;
    border-radius: 50%;
    background: #fff;
}
.who {
    padding: 1px 0 0 11px;
}
.sender {
    font-size: 15px;
    line-height: 27px;
    letter-spacing: -0.22px;
    color: #444;
}
.to {
    display: flex;
    align-items: center;
    line-height: 11px;
    color: #605e5c;
    letter-spacing: -0.25px;
}
.to svg {
    margin: 0 3px 0 10px;
}
.to span {
    color: #252423;
}
.side {
    margin-left: auto;
    margin-top: -10px;
}
.actions {
    height: 32px;
    display: flex;
    font-size: 12px;
    letter-spacing: -0.2px;
}
.actions span {
    border: 1px solid #b3b0ad;
    margin-left: -1px;
    display: flex;
    align-items: center;
    justify-content: center;
    gap: 7px;
    background: #fff;
}
.actions .smile { width: 33px; }
.actions .re { width: 78px; }
.actions .all { width: 95px; }
.actions .fw { width: 91px; }
.actions .tm { width: 33px; margin-left: 8px; }
.actions .more { width: 33px; margin-left: 6px; }
.date {
    padding-top: 1px;
    text-align: right;
    line-height: 22px;
    letter-spacing: -0.35px;
    color: #605e5c;
}
.attachment {
    width: 200px;
    height: 42px;
    padding: 0 6px 0 8px;
    border: 1px solid #ababab;
    background: #fdfdfd;
    display: flex;
    align-items: center;
    line-height: 16px;
    letter-spacing: -0.45px;
}
.attachment div {
    margin: 1px 0 0 12px;
}
.attachment small {
    display: block;
    font-size: 12px;
    color: #605e5c;
}
.attachment .more {
    margin: 1px 0 0 auto;
}
.pdf {
    font-family: "Open Sans", sans-serif;
    font-size: 8px;
    font-weight: 700;
    fill: #f58a1f;
    letter-spacing: 0;
}
.letter {
    margin: 24px 4px 0 -8px;
    color: #000;
    font-family: Lato, "Liberation Sans", sans-serif;
    font-size: 13px;
    line-height: 19px;
    letter-spacing: 0.27px;
}
.letter p {
    margin-bottom: 19px;
}
.letter .claim {
    letter-spacing: 0.16px;
}
.letter .address {
    letter-spacing: -0.03px;
}
.letter .queries {
    margin-bottom: 18px;
    letter-spacing: 0.32px;
}
.notice {
    margin-bottom: 19px;
    color: #f00;
    font-family: "Liberation Sans", sans-serif;
    font-size: 15px;
    line-height: 18px;
    letter-spacing: -0.1px;
    white-space: nowrap;
}
.mimecast {
    margin-top: 33px;
    padding: 6px 0 2px;
    border: 1px solid #a0a0a0;
    border-width: 1px 0;
    box-shadow: inset 0 1px #fff, inset 0 2px #e3e3e3, 0 1px #fff, 0 2px #e3e3e3;
    font-family: "Liberation Sans", sans-serif;
    line-height: 16px;
    letter-spacing: 0.15px;
}
.mimecast a {
    color: #00f;
}

/* status bar */
.status {
    height: 22px;
    flex: none;
    display: flex;
    align-items: center;
    padding-left: 12px;
    background: #f3f2f1;
    border-top: 1px solid #c2c1c0;
    color: #555;
    font-size: 11.500px;
    line-height: 19px;
    letter-spacing: -0.15px;
    white-space: nowrap;
}
.status > span {
    height: 21px;
}
.status .sync {
    margin-left: auto;
    width: 150px;
}
.status .conn {
    width: 195px;
}
.status .view {
    width: 40px;
    display: flex;
    align-items: center;
    justify-content: center;
    background: #d2d0ce;
}
.status .book {
    margin: 0 19px 0 12px;
}
.status .percent {
    width: 48px;
    padding-left: 13px;
}

/* windows taskbar */
.taskbar {
    height: 40px;
    flex: none;
    display: flex;
    background: linear-gradient(90deg, #21363f, #20333e 60%, #1b2742 85%);
    color: #fff;
}
.start {
    width: 48px;
    display: flex;
    align-items: center;
    justify-content: center;
}
.find {
    width: 287px;
    border: 1px solid #bbb;
    background: #f2f2f2;
    color: #333;
    display: flex;
    align-items: center;
    padding: 0 2px 0 12px;
    font-size: 15px;
    letter-spacing: -0.55px;
}
.find span {
    margin-left: 10px;
}
.pill {
    width: 72px;
    height: 32px;
    margin-left: auto;
    border-radius: 6px;
    background: #e1e1e1;
    display: flex;
    align-items: center;
    justify-content: center;
}
.apps {
    display: flex;
}
.apps span {
    width: 49.200px;
    height: 40px;
    display: flex;
    align-items: center;
    justify-content: center;
}
.apps span:first-child {
    margin-right: 1.500px;
}
.apps .open {
    width: 40px;
    margin: 0 4.600px;
    box-shadow: inset 0 -3px #76b9ed;
}
.apps .now {
    width: 48px;
    margin: 0 .6px;
    background-color: #4c606a;
}
.apps text.app {
    font-size: 12px;
    font-weight: 700;
    fill: #fff;
}
.cx {
    font-size: 7px;
    fill: #aaa;
}
.badge {
    font-size: 13px;
    fill: #fff;
}
.alert {
    font-size: 10px;
    fill: #fff;
}
.tray {
    margin-left: auto;
    width: 376px;
    display: flex;
    align-items: center;
    font-size: 14px;
    letter-spacing: -0.4px;
    white-space: nowrap;
}
.temp {
    width: 31px;
    margin-left: 7px;
}
.sunny {
    width: 99px;
}
.upd {
    margin-left: 9px;
}
.wifi {
    margin-left: 9px;
}
.mute {
    margin-left: 8px;
}
.clock {
    width: 64px;
    margin-left: 8px;
    font-size: 12px;
    line-height: 18px;
    text-align: center;
}
.notes {
    position: relative;
    margin-left: 15px;
}
.notes b {
    position: absolute;
    left: 5px;
    top: 7px;
    width: 20px;
    height: 17px;
    border: 1px solid #999;
    border-radius: 9px;
    background: #2b3038;
    font-size: 11px;
    line-height: 15px;
    text-align: center;
}
```
